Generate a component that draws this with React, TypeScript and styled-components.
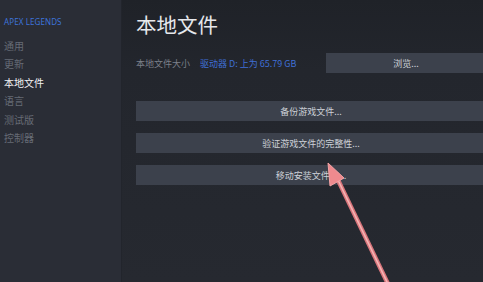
import React from "react";
import styled, { createGlobalStyle } from "styled-components";

const Global = createGlobalStyle`
  html, body { margin: 0; padding: 0; background: #252830; overflow: hidden; }
  body { font-family: "Noto Sans CJK SC", "Noto Sans", sans-serif; }
`;

const Frame = styled.div`
  position: relative;
  width: 483px;
  height: 282px;
  overflow: hidden;
  display: flex;
  background: #252830;
`;

const Sidebar = styled.nav`
  width: 122px;
  flex: none;
  background: #2a2d36;
  border-right: 1px solid #22252c;
  padding: 16px 0 0 4px;
  box-sizing: border-box;
  display: flex;
  flex-direction: column;
`;

const GameName = styled.div`
  font-family: "Noto Sans", sans-serif;
  font-size: 8px;
  color: #3d73d9;
  letter-spacing: 0.1px;
  line-height: 12px;
  margin-bottom: 8.5px;
`;

const NavItem = styled.div<{ $active?: boolean }>`
  font-size: 10px;
  line-height: 18.5px;
  height: 18.5px;
  color: ${(p) => (p.$active ? "#f2f3f5" : "#666b75")};
`;

const Main = styled.main`
  flex: none;
  width: 365px;
  padding: 10px 0 0 14px;
  box-sizing: border-box;
  display: flex;
  flex-direction: column;
  background: linear-gradient(180deg, #1f2228 0%, #23262d 25%, #262930 100%);
`;

const Title = styled.h1`
  margin: 0;
  font-weight: 400;
  font-size: 20.5px;
  line-height: 28px;
  color: #e6e8ec;
  letter-spacing: 0;
`;

const SizeRow = styled.div`
  display: flex;
  align-items: center;
  margin-top: 15px;
  height: 20px;
`;

const SizeLabel = styled.span`
  font-size: 9px;
  color: #7b808a;
  width: 64px;
`;

const SizeValue = styled.span`
  font-size: 9px;
  color: #3f6fd6;
  width: 126px;
`;

const Button = styled.div<{ $w: number }>`
  width: ${(p) => p.$w}px;
  height: 20px;
  flex: none;
  background: #3c414c;
  color: #cdd1d8;
  font-size: 9px;
  display: flex;
  align-items: center;
  justify-content: center;
`;

const ButtonStack = styled.div`
  display: flex;
  flex-direction: column;
  gap: 12px;
  margin-top: 28px;
`;

const Arrow = styled.svg`
  position: absolute;
  left: 0;
  top: 0;
  pointer-events: none;
`;

export default function App() {
  return (
    <>
      <Global />
      <Frame>
        <Sidebar>
          <GameName>APEX LEGENDS</GameName>
          <NavItem>通用</NavItem>
          <NavItem>更新</NavItem>
          <NavItem $active>本地文件</NavItem>
          <NavItem>语言</NavItem>
          <NavItem>测试版</NavItem>
          <NavItem>控制器</NavItem>
        </Sidebar>
        <Main>
          <Title>本地文件</Title>
          <SizeRow>
            <SizeLabel>本地文件大小</SizeLabel>
            <SizeValue>驱动器 D: 上为 65.79 GB</SizeValue>
            <Button $w={160}>浏览...</Button>
          </SizeRow>
          <ButtonStack>
            <Button $w={350}>备份游戏文件...</Button>
            <Button $w={350}>验证游戏文件的完整性...</Button>
            <Button $w={350}>移动安装文件夹...</Button>
          </ButtonStack>
        </Main>
        <Arrow width="483" height="282" viewBox="0 0 483 282">
          <line x1="338" y1="180" x2="388" y2="284" stroke="#d9767c" strokeWidth="4.5" />
          <line x1="338" y1="180" x2="388" y2="284" stroke="#f5b3b3" strokeWidth="1.6" />
          <polygon points="328,163 344,178 330,186" fill="#ee8a8e" stroke="#f3a3a5" strokeWidth="1" strokeLinejoin="round" />
        </Arrow>
      </Frame>
    </>
  );
}
